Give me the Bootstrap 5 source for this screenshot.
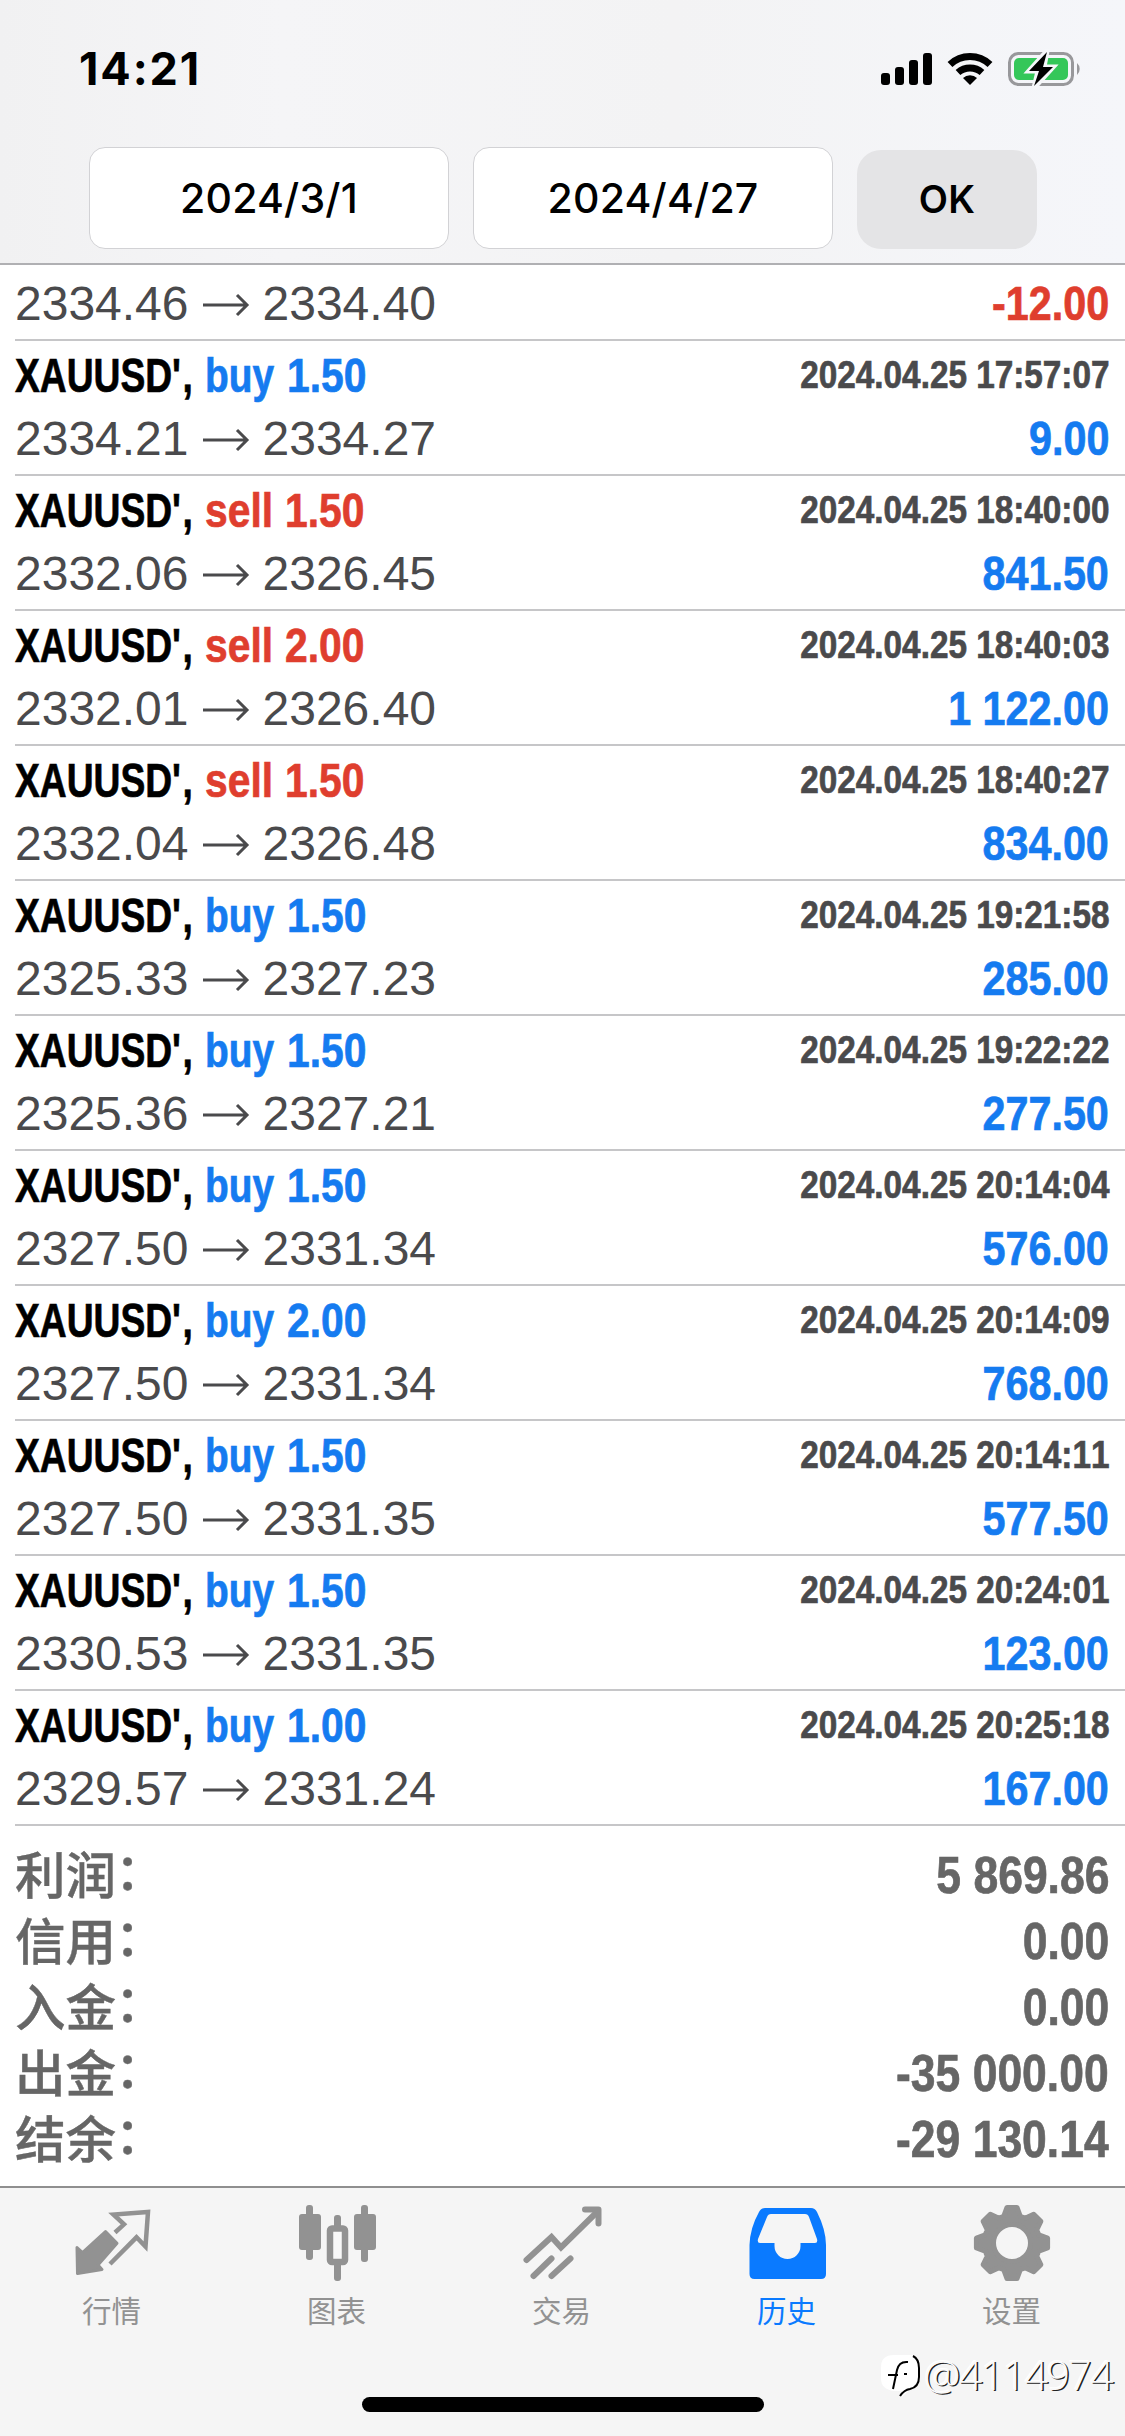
<!DOCTYPE html>
<html lang="zh-CN">
<head>
<meta charset="utf-8">
<meta name="viewport" content="width=device-width, initial-scale=1">
<title>历史</title>
<link rel="stylesheet" href="https://cdn.jsdelivr.net/npm/bootstrap@5.3.0/dist/css/bootstrap.min.css">
<style>
body{width:1125px;height:2436px;overflow:hidden;background:#fff;font-family:"Liberation Sans","Noto Sans CJK SC",sans-serif;color:#000}
.top-pane{height:265px;background:linear-gradient(90deg,#f1f1f2,#f5f5f7 25%,#f3f3f4 60%,#f5f6fa);border-bottom:2px solid #b0b0b3}
.status{height:147px;padding:44px 41px 0 79px;font-family:Inter,sans-serif}
.clock{font-size:45px;font-weight:700;line-height:50px;letter-spacing:1.9px}
.dates{padding-left:89px;gap:24px;font-family:Inter,sans-serif;font-size:41px;font-weight:500;letter-spacing:.2px}
.date-btn{width:360px;height:102px;padding-top:2px;border:1.5px solid #d2d2d5;border-radius:16px;background:#fff}
.ok-btn{width:180px;height:99px;margin-top:3px;border-radius:24px;background:#e4e4e6;font-weight:600;font-size:38px}
.deal{height:135px;margin-left:15px;padding-right:16px;border-bottom:2px solid #c6c6c8}
.deal.first{height:76px;padding-top:12px}
.ln{white-space:pre;font-size:48px;line-height:54px;font-kerning:none}
.ln1{height:71px;padding-top:8px}
.nar{display:block;transform-origin:0 0;font-weight:700;white-space:pre;-webkit-text-stroke:.7px currentColor}
.sym{width:190px;transform:scaleX(.775);font-kerning:normal}
.tick{margin-right:2px}
.w-buy{width:82px;transform:scaleX(.81)}
.w-sell{width:80px;transform:scaleX(.85)}
.vol{transform:scaleX(.85)}
.rt{transform-origin:100% 0}
.stamp{font-size:38.5px;line-height:52px;transform:scaleX(.865);color:#4a4a4c}
.amt{transform:scaleX(.86)}
.px{color:#4a4a4c}
.blue{color:#157bf0}.red{color:#df3e2e}
.totals{padding:15px 16px 0 15px;color:#666;height:360px}
.tot{height:66px}
.tot .lab{font-family:"Noto Sans CJK SC",sans-serif;font-size:50.5px;line-height:62px;font-weight:500;-webkit-text-stroke:.4px currentColor}
.colon{display:inline-block;margin-left:-1px;vertical-align:top;line-height:55px}
.tot .val{font-size:52px;line-height:68px;transform:scaleX(.855)}
.tabs{height:250px;background:#f5f5f5;border-top:2px solid #8f8f8f;color:#929292;font-family:"Noto Sans CJK SC",sans-serif;font-size:29.5px}
.tab-i{width:225px;padding-right:2px}
.tab-i svg{display:block;margin-top:12px}
.tab-i span{line-height:40px;margin-top:5px}
.tab-i.on{color:#0a7aff}
.home{left:362px;top:2397px;width:402px;height:15px;border-radius:8px;background:#000}
.wm{left:880px;top:2349px}
.wm-t{margin-left:-2px;font-family:"Open Sans","Noto Sans",sans-serif;font-weight:300;font-size:41px;line-height:50px;letter-spacing:-1.5px;color:#fafafa;text-shadow:1.5px 1px 0 #222,-1px -1px 0 #fff}
</style>
</head>
<body class="position-relative d-flex flex-column">
<header class="top-pane flex-shrink-0">
  <div class="status d-flex justify-content-between">
    <div class="clock">14:21</div>
    <svg width="205" height="40" viewBox="0 0 205 40" style="margin-top:5px">
      <g><rect x="2" y="24" width="9" height="12" rx="3"/><rect x="16" y="18" width="9" height="18" rx="3"/><rect x="30" y="11" width="9" height="25" rx="3"/><rect x="44" y="4" width="9" height="32" rx="3"/></g>
      <g fill="none" stroke="#000" stroke-width="7"><path d="M71 15.500A29 29 0 0 1 111 15.500"/><path d="M79 23.500A18 18 0 0 1 103 23.500"/></g>
      <path d="M91 36l-7-7a10 10 0 0 1 14 0z"/>
      <rect x="130.500" y="4.500" width="63" height="31" rx="9" fill="none" stroke="#98989b" stroke-width="3"/>
      <rect x="135" y="9" width="54" height="22" rx="5" fill="#34c759"/>
      <path d="M198 14a8 8 0 0 1 0 12z" fill="#98989b"/>
      <path d="M168 2l-18 20h9l-4 17 19-21h-9z" stroke="#f6f7fa" stroke-width="5"/><path d="M168 3l-18 19h10l-5 15 19-19h-10z"/>
    </svg>
  </div>
  <div class="dates d-flex">
    <div class="date-btn d-flex align-items-center justify-content-center">2024/3/1</div>
    <div class="date-btn d-flex align-items-center justify-content-center">2024/4/27</div>
    <div class="ok-btn d-flex align-items-center justify-content-center">OK</div>
  </div>
</header>
<main id="deals" class="flex-shrink-0"></main>
<section class="totals flex-shrink-0">
  <div class="tot d-flex justify-content-between"><span class="lab">利润<span class="colon">：</span></span><span class="nar rt val">5 869.86</span></div>
  <div class="tot d-flex justify-content-between"><span class="lab">信用<span class="colon">：</span></span><span class="nar rt val">0.00</span></div>
  <div class="tot d-flex justify-content-between"><span class="lab">入金<span class="colon">：</span></span><span class="nar rt val">0.00</span></div>
  <div class="tot d-flex justify-content-between"><span class="lab">出金<span class="colon">：</span></span><span class="nar rt val">-35 000.00</span></div>
  <div class="tot d-flex justify-content-between"><span class="lab">结余<span class="colon">：</span></span><span class="nar rt val">-29 130.14</span></div>
</section>
<nav class="tabs d-flex flex-shrink-0">
  <div class="tab-i d-flex flex-column align-items-center">
    <svg width="80" height="84" viewBox="0 0 80 84" fill="currentColor"><path d="M5 47.500L10.500 52.500 33.500 31.500 45 43.300 26 65 30 69.500 5.500 73.500Z" stroke="currentColor" stroke-width="3" stroke-linejoin="round"/><path d="M43 32.500L52 24.300 41.500 14.500 76 12 73.500 46.500 64.500 37.300 38 64" fill="none" stroke="currentColor" stroke-width="4.500"/></svg>
    <span>行情</span></div>
  <div class="tab-i d-flex flex-column align-items-center">
    <svg width="80" height="84" viewBox="0 0 80 84" fill="currentColor"><rect x="2" y="14" width="22" height="36" rx="3"/><rect x="9" y="5" width="7" height="55" rx="3"/><rect x="57" y="14" width="22" height="36" rx="3"/><rect x="64" y="5" width="7" height="57" rx="3"/><rect x="37" y="15" width="7" height="66" rx="3"/><rect x="33" y="28.500" width="15" height="33.500" rx="2" fill="#f8f8f8" stroke="currentColor" stroke-width="6.500"/></svg>
    <span>图表</span></div>
  <div class="tab-i d-flex flex-column align-items-center">
    <svg width="80" height="84" viewBox="0 0 80 84" fill="none" stroke="currentColor" stroke-width="6" stroke-linecap="round"><path d="M4.500 60L29.500 37 39 47.500 75 12"/><path d="M63 9.500H76.500V23.500" stroke-linejoin="round"/><path d="M11.500 76L29.500 58.500M29.500 76L48.500 58.500"/></svg>
    <span>交易</span></div>
  <div class="tab-i on d-flex flex-column align-items-center">
    <svg width="80" height="84" viewBox="0 0 80 84" fill="currentColor"><path fill-rule="evenodd" d="M18 8H64q4 0 6 4Q79 30 79 45V74q0 5-5 5H7.500q-5 0-5-5V45Q3 28 12 12q2-4 6-4zM24 14q-3 0-4 3L11 39q-1 4 2 4H27.500v3a13 13 0 0 0 26 0v-3H68q3 0 2-4L62 17q-1-3-4-3z"/></svg>
    <span>历史</span></div>
  <div class="tab-i d-flex flex-column align-items-center">
    <svg width="80" height="84" viewBox="-40 -43 80 84" fill="currentColor"><path id="gear" fill-rule="evenodd" stroke="currentColor" stroke-width="5" stroke-linejoin="round" d=""/></svg>
    <span>设置</span></div>
</nav>
<div class="home position-absolute"></div>
<div class="wm position-absolute d-flex">
  <svg width="46" height="50" viewBox="0 0 46 50"><path d="M14 6h16q10 0 10 12v10q0 10-9 12l-9 8v-6h-8Q1 40 1 30V18Q1 6 14 6z" fill="#fff"/><path d="M33 7q6 3 6 12v9q0 10-9 12-6 1-10 7" fill="none" stroke="#000" stroke-width="2"/><path d="M28 13q-9-1-11 8l-4 19M8 26h10M24 25h3" fill="none" stroke="#000" stroke-width="2"/></svg>
  <span class="wm-t">@4114974</span>
</div>
<script>
const rows=[[null,null,null,"2334.46","2334.40","-12.00"],
["buy","1.50","17:57:07","2334.21","2334.27","9.00"],
["sell","1.50","18:40:00","2332.06","2326.45","841.50"],
["sell","2.00","18:40:03","2332.01","2326.40","1 122.00"],
["sell","1.50","18:40:27","2332.04","2326.48","834.00"],
["buy","1.50","19:21:58","2325.33","2327.23","285.00"],
["buy","1.50","19:22:22","2325.36","2327.21","277.50"],
["buy","1.50","20:14:04","2327.50","2331.34","576.00"],
["buy","2.00","20:14:09","2327.50","2331.34","768.00"],
["buy","1.50","20:14:11","2327.50","2331.35","577.50"],
["buy","1.50","20:24:01","2330.53","2331.35","123.00"],
["buy","1.00","20:25:18","2329.57","2331.24","167.00"]];
document.getElementById("deals").innerHTML=rows.map(([a,v,t,p,q,m])=>{
 const c=a==="sell"?"red":"blue";
 const head=a?`<div class="ln ln1 d-flex justify-content-between"><div class="d-flex"><span class="nar sym">XAUUSD<span class="tick">'</span>,</span><span class="d-flex ${c}"><span class="nar w-${a}">${a}</span><span class="nar vol">${v}</span></span></div><span class="nar rt stamp">2024.04.25 ${t}</span></div>`:"";
 return `<div class="deal${a?"":" first"}">${head}<div class="ln ln2 d-flex justify-content-between"><div class="px d-flex">${p}<svg width="74" height="54" viewBox="0 0 74 54" fill="none" stroke="#4a4a4c" stroke-width="3"><path d="M14 28h43M48 18l10 10-10 10"/></svg>${q}</div><span class="nar rt amt ${m[0]==="-"?"red":"blue"}">${m}</span></div></div>`}).join("");
// gear outline: eight trapezoid teeth, 45 degrees apart
let d="";for(let i=0;i<8;i++){const b=i*45;[[-17,28],[-8,36],[8,36],[17,28]].forEach(([o,r],k)=>{const g=(b+o-90)*Math.PI/180;d+=(i||k?"L":"M")+(r*Math.cos(g)).toFixed(1)+" "+(r*Math.sin(g)).toFixed(1)})}
document.getElementById("gear").setAttribute("d",d+"ZM18.500 0A18.500 18.500 0 1 0-18.500 0A18.500 18.500 0 1 0 18.500 0Z");
</script>
<script src="https://cdn.jsdelivr.net/npm/bootstrap@5.3.0/dist/js/bootstrap.bundle.min.js"></script>
</body>
</html>
